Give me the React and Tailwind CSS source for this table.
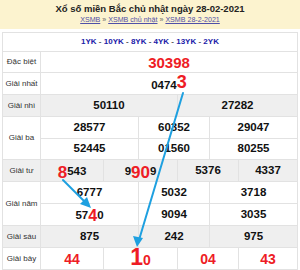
import React from "react";

function Cell({ children, className = "", gray = false }) {
  return (
    <div
      className={`flex items-center justify-center ${gray ? "bg-[#efefef]" : "bg-white"} ${className}`}
    >
      {children}
    </div>
  );
}

function Label({ children, className = "", gray = false }) {
  return (
    <Cell gray={gray} className={`text-[8px] text-[#333] font-normal ${className}`}>
      {children}
    </Cell>
  );
}

function N({ children }) {
  return <span className="text-[11.5px] font-bold text-[#111] leading-none">{children}</span>;
}

function R({ children, size = "text-[17px]" }) {
  return <span className={`${size} font-bold text-[#ee1c25] leading-none`}>{children}</span>;
}

export default function App() {
  return (
    <div
      className="relative w-[300px] h-[270px] overflow-hidden bg-white"
      style={{ fontFamily: '"Liberation Sans", Arial, sans-serif' }}
    >
      <div className="h-[29px] bg-[#fcf3cf] flex flex-col items-center pt-[3px]">
        <div className="text-[9.5px] font-bold text-[#222] leading-[11px]">
          Xổ số miền Bắc chủ nhật ngày 28-02-2021
        </div>
        <div className="text-[7.1px] leading-[10px] mt-[1px] text-[#666]">
          <span className="underline text-[#5050a8]">XSMB</span> »{" "}
          <span className="underline text-[#5050a8]">XSMB chủ nhật</span> »{" "}
          <span className="underline text-[#5050a8]">XSMB 28-2-2021</span>
        </div>
      </div>
      <div className="mt-[3px] ml-[2px] w-[296px] border border-[#e2e2e2]">
        <div className="h-[19px] flex items-center justify-center text-[8px] font-bold text-[#555] border-b border-[#e2e2e2]">
          <span className="text-[#2020a8]">1YK</span>&nbsp;-&nbsp;
          <span className="text-[#2020a8]">10YK</span>&nbsp;-&nbsp;
          <span className="text-[#2020a8]">8YK</span>&nbsp;-&nbsp;
          <span className="text-[#2020a8]">4YK</span>&nbsp;-&nbsp;
          <span className="text-[#2020a8]">13YK</span>&nbsp;-&nbsp;
          <span className="text-[#2020a8]">2YK</span>
        </div>
        <div className="grid grid-cols-[37px_62px_34px_38px_31px_28px_58px] grid-rows-[20px_21px_21px_21px_20px_21px_21px_21px_21px_21px] gap-px bg-[#e2e2e2]">
          <Label>Đặc biệt</Label>
          <Cell className="col-span-6">
            <R size="text-[15px]">30398</R>
          </Cell>
          <Label>Giải nhất</Label>
          <Cell className="col-span-6 items-end pb-[3px]">
            <N>0474</N>
            <R size="text-[18px]">3</R>
          </Cell>
          <Label gray>Giải nhì</Label>
          <Cell gray className="col-span-3"><N>50110</N></Cell>
          <Cell gray className="col-span-3"><N>27282</N></Cell>
          <Label className="row-span-2">Giải ba</Label>
          <Cell className="col-span-2"><N>28577</N></Cell>
          <Cell className="col-span-2"><N>60352</N></Cell>
          <Cell className="col-span-2"><N>29047</N></Cell>
          <Cell className="col-span-2"><N>52445</N></Cell>
          <Cell className="col-span-2"><N>01560</N></Cell>
          <Cell className="col-span-2"><N>80255</N></Cell>
          <Label gray>Giải tư</Label>
          <Cell gray className="items-baseline pt-[3px]">
            <R>8</R><N>543</N>
          </Cell>
          <Cell gray className="col-span-2 items-baseline pt-[3px]">
            <N>9</N><R>90</R><N>9</N>
          </Cell>
          <Cell gray className="col-span-2"><N>5376</N></Cell>
          <Cell gray><N>4337</N></Cell>
          <Label className="row-span-2">Giải năm</Label>
          <Cell className="col-span-2"><N>6777</N></Cell>
          <Cell className="col-span-2"><N>5032</N></Cell>
          <Cell className="col-span-2"><N>3718</N></Cell>
          <Cell className="col-span-2 items-baseline pt-[3px]">
            <N>57</N><R size="text-[16px]">4</R><N>0</N>
          </Cell>
          <Cell className="col-span-2"><N>9094</N></Cell>
          <Cell className="col-span-2"><N>3035</N></Cell>
          <Label gray>Giải sáu</Label>
          <Cell gray className="col-span-2"><N>875</N></Cell>
          <Cell gray className="col-span-2"><N>242</N></Cell>
          <Cell gray className="col-span-2"><N>975</N></Cell>
          <Label>Giải bảy</Label>
          <Cell><R size="text-[14px]">44</R></Cell>
          <Cell className="col-span-2 items-end">
            <span className="leading-none">
              <R size="text-[23px]">1</R>
              <R size="text-[14px]">0</R>
            </span>
          </Cell>
          <Cell className="col-span-2"><R size="text-[14px]">04</R></Cell>
          <Cell><R size="text-[14px]">43</R></Cell>
        </div>
      </div>
      <svg
        className="absolute inset-0 pointer-events-none"
        width="300"
        height="270"
        viewBox="0 0 300 270"
      >
        <g stroke="#1ea0e0" strokeWidth="2" fill="none" strokeLinecap="round">
          <line x1="183" y1="93" x2="139" y2="240" />
          <line x1="63" y1="180" x2="86" y2="203" />
        </g>
        <g fill="#1ea0e0">
          <polygon points="137,247 133,236 143,238" />
          <polygon points="91,208 80,204 87,197" />
        </g>
      </svg>
    </div>
  );
}
